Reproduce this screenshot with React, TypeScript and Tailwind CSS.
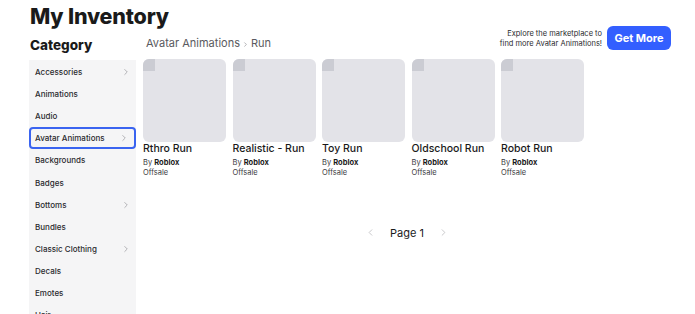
import { ChevronRight, ChevronLeft } from 'lucide-react';

const categories = [
  { name: 'Accessories', sub: true },
  { name: 'Animations', sub: false },
  { name: 'Audio', sub: false },
  { name: 'Avatar Animations', sub: true, active: true },
  { name: 'Backgrounds', sub: false },
  { name: 'Badges', sub: false },
  { name: 'Bottoms', sub: true },
  { name: 'Bundles', sub: false },
  { name: 'Classic Clothing', sub: true },
  { name: 'Decals', sub: false },
  { name: 'Emotes', sub: false },
  { name: 'Hair', sub: false },
];

const items = ['Rthro Run', 'Realistic - Run', 'Toy Run', 'Oldschool Run', 'Robot Run'];

export default function App() {
  return (
    <div
      className="w-[695px] h-[314px] overflow-hidden bg-white text-[#1a1a1a] pl-[30px] pr-[24px]"
      style={{ fontFamily: 'Inter, "Noto Sans", sans-serif' }}
    >
      <h1 className="text-[21.5px] font-extrabold leading-none pt-[6px] h-[34px] tracking-[-0.2px]">My Inventory</h1>

      <div className="flex">
        {/* Sidebar */}
        <div className="w-[107px] shrink-0 -ml-[1px]">
          <h2 className="text-[13.5px] font-extrabold leading-none h-[20px] pt-[5px] pl-[1px]">Category</h2>
          <ul className="bg-[#f5f5f6] mt-[6px] pt-[1px]">
            {categories.map((c) => (
              <li
                key={c.name}
                className={`flex items-center justify-between h-[22.1px] pr-[5px] text-[8px] font-medium text-[#2a2a2e] ${
                  c.active ? 'border-2 border-[#3a64f0] rounded-[4px] pl-[4px]' : 'pl-[6px]'
                }`}
              >
                <span>{c.name}</span>
                {c.sub && <ChevronRight className="w-[10px] h-[10px] text-[#8a8a8f]" strokeWidth={1.5} />}
              </li>
            ))}
          </ul>
        </div>

        {/* Main */}
        <div className="flex-1 pl-[7px] -mt-[8px]">
          <div className="flex items-start justify-between">
            <div className="text-[11px] text-[#5a5a60] pt-[9px] pl-[3px] flex items-center gap-[2px]">
              Avatar Animations
              <ChevronRight className="w-[7px] h-[7px] mt-[2px]" strokeWidth={1.5} />
              Run
            </div>
            <div className="flex items-center gap-[5px]">
              <p className="text-[7.5px] text-right leading-[10px] text-[#2a2a2e] pt-[1px]">
                Explore the marketplace to
                <br />
                find more Avatar Animations!
              </p>
              <button className="bg-[#335fff] text-white text-[11px] font-bold rounded-[6px] w-[64px] h-[24px]">
                Get More
              </button>
            </div>
          </div>

          <div className="flex gap-[6.5px] mt-[7px]">
            {items.map((name) => (
              <div key={name} className="w-[83px]">
                <div className="relative w-[83px] h-[83px] rounded-[6px] bg-[#e3e3e8] overflow-hidden">
                  <div className="absolute top-0 left-0 w-[12px] h-[12px] bg-[#cbccd3]" />
                </div>
                <div className="text-[10.5px] font-medium mt-[0px] leading-[14px] whitespace-nowrap">{name}</div>
                <div className="text-[7.5px] mt-[1px] leading-[11px] text-[#3a3a3e]">
                  By <span className="font-bold text-[#1a1a1a]">Roblox</span>
                </div>
                <div className="text-[7.5px] leading-[10px] text-[#3a3a3e]">Offsale</div>
              </div>
            ))}
          </div>

          <div className="flex items-center justify-center gap-[14px] mt-[47px]">
            <ChevronLeft className="w-[11px] h-[11px] text-[#b0b0b5]" strokeWidth={1.5} />
            <span className="text-[11px] text-[#1a1a1a]">Page 1</span>
            <ChevronRight className="w-[11px] h-[11px] text-[#b0b0b5]" strokeWidth={1.5} />
          </div>
        </div>
      </div>
    </div>
  );
}
